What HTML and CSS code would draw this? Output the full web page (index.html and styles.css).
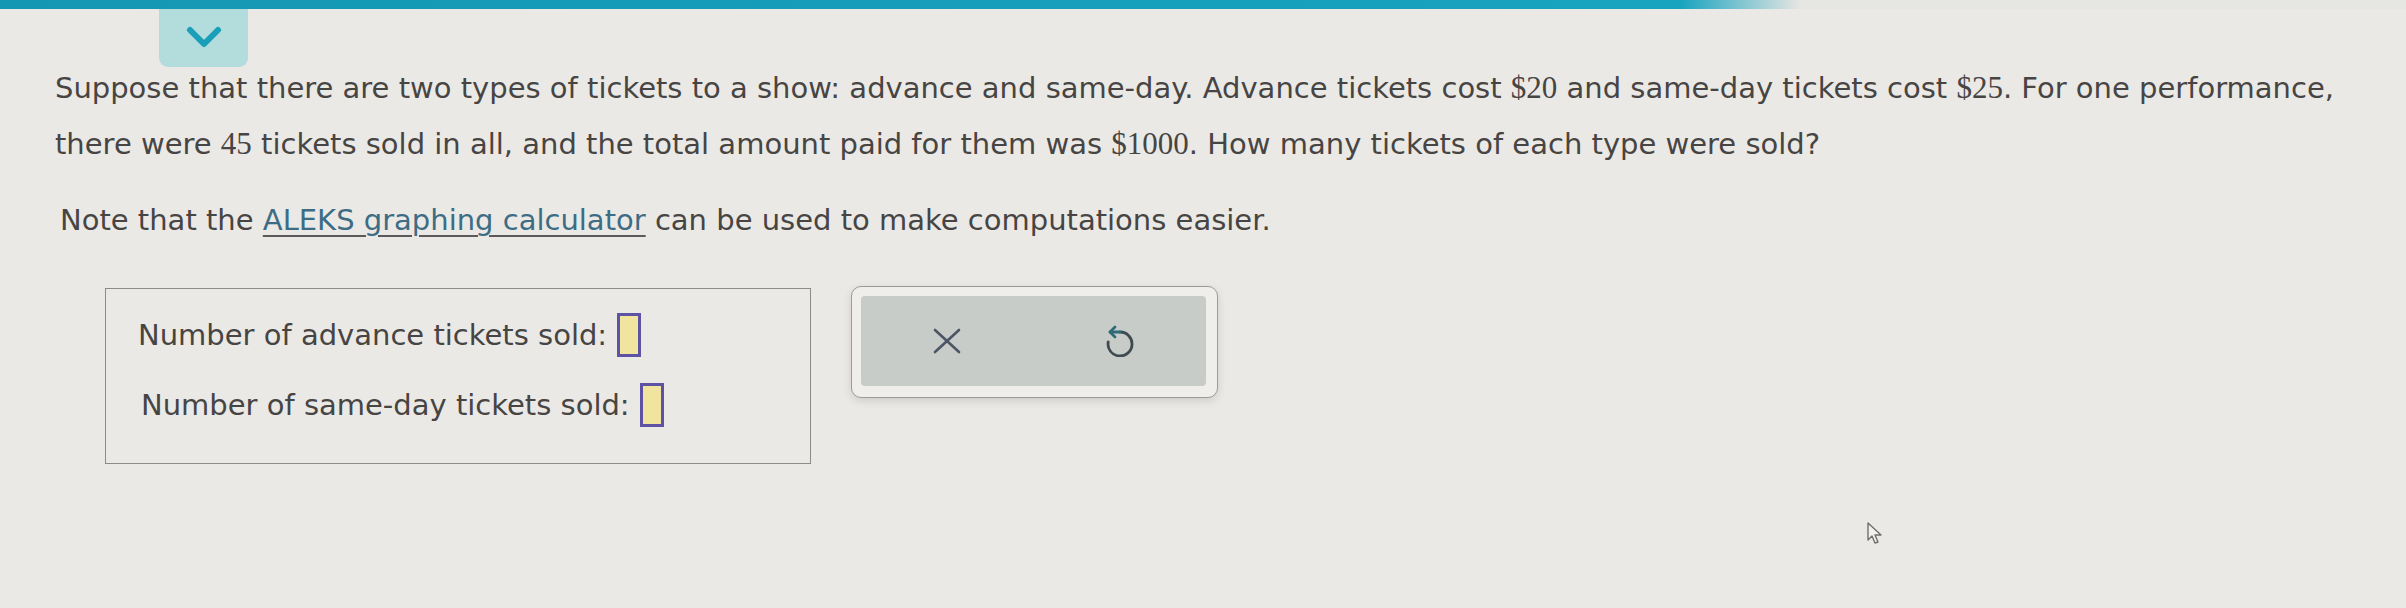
FILE: index.html
```html
<!DOCTYPE html>
<html lang="en">
<head>
<meta charset="utf-8">
<title>ALEKS question</title>
<link rel="stylesheet" href="styles.css">
</head>
<body>
<header class="topbar">
  <button class="collapse-tab" aria-label="Collapse">
    <svg width="36" height="22" viewBox="0 0 36 22"><polyline points="4,4 18,18 32,4" fill="none" stroke="#1a9fb8" stroke-width="6" stroke-linecap="round" stroke-linejoin="round"/></svg>
  </button>
</header>
<main class="page">
  <p class="question">Suppose that there are two types of tickets to a show: advance and same-day. Advance tickets cost <span class="math">$20</span> and same-day tickets cost <span class="math">$25</span>. For one performance, there were <span class="math">45</span> tickets sold in all, and the total amount paid for them was <span class="math">$1000</span>. How many tickets of each type were sold?</p>
  <p class="note">Note that the <a class="link" href="#">ALEKS graphing calculator</a> can be used to make computations easier.</p>
  <div class="work">
    <div class="answer-box">
      <div class="answer-row row-1"><span>Number of advance tickets sold:</span><span class="input"></span></div>
      <div class="answer-row row-2"><span>Number of same-day tickets sold:</span><span class="input"></span></div>
    </div>
    <div class="tools">
      <div class="tools-inner">
        <span class="tool">
          <svg width="28" height="26" viewBox="0 0 28 26"><path d="M2 2 L26 24 M26 2 L2 24" stroke="#4c5566" stroke-width="2.6" fill="none" stroke-linecap="round"/></svg>
        </span>
        <span class="tool">
          <svg width="30" height="32" viewBox="0 0 30 32"><path d="M15 7 A12 12 0 1 1 3.2 17" stroke="#3f4b50" stroke-width="2.8" fill="none" stroke-linecap="round"/><path d="M15 7 L5 7" stroke="#2f6a78" stroke-width="2.8" fill="none" stroke-linecap="round"/><path d="M10 2 L5 7 L10 12" stroke="#2f6a78" stroke-width="2.8" fill="none" stroke-linecap="round" stroke-linejoin="round"/></svg>
        </span>
      </div>
    </div>
  </div>
</main>
<svg class="cursor" width="18" height="24" viewBox="0 0 18 24"><path d="M2 2 L2 19 L6 15 L9 22 L12 21 L9 14 L15 14 Z" fill="#f2f1ee" stroke="#6f6f6f" stroke-width="1.4" stroke-linejoin="round"/></svg>
</body>
</html>
```

FILE: styles.css
```css
html, body {
  margin: 0;
  padding: 0;
}
body {
  background: #ebe9e6;
  color: #474543;
  font-family: "DejaVu Sans", Verdana, sans-serif;
  font-size: 29px;
  width: 2406px;
  height: 608px;
  overflow: hidden;
  position: relative;
}
.topbar {
  position: relative;
  height: 9px;
  background: linear-gradient(to right, #1497b3 0, #18a3bf 1680px, #e6e6e3 1800px);
}
.collapse-tab {
  position: absolute;
  top: 9px;
  left: 159px;
  width: 89px;
  height: 58px;
  border: none;
  padding: 0;
  background: #b3dcdd;
  border-radius: 0 0 9px 9px;
  display: flex;
  align-items: center;
  justify-content: center;
  padding-bottom: 2px;
}
.page {
  padding: 51px 40px 0 55px;
}
.question {
  margin: 0;
  max-width: 2320px;
  line-height: 56px;
}
.math {
  font-family: "Liberation Serif", "Times New Roman", serif;
  font-size: 31px;
  line-height: 1;
}
.note {
  margin: 20px 0 0 5px;
  line-height: 56px;
}
.link {
  color: #3d6d84;
  text-decoration: underline;
  text-decoration-color: #5a5a5a;
  text-underline-offset: 5px;
  text-decoration-thickness: 2px;
}
.work {
  display: flex;
  align-items: flex-start;
  gap: 40px;
  margin-top: 40px;
  margin-left: 50px;
}
.answer-box {
  width: 706px;
  height: 176px;
  border: 1.5px solid #8d8b88;
  box-sizing: border-box;
  padding: 24px 0 0 32px;
  display: flex;
  flex-direction: column;
  gap: 26px;
}
.answer-row {
  display: flex;
  align-items: center;
  gap: 10px;
  height: 44px;
}
.row-2 {
  padding-left: 3px;
}
.input {
  display: inline-block;
  width: 18px;
  height: 38px;
  border: 3px solid #5d52a3;
  background: #f0e49e;
}
.tools {
  width: 367px;
  height: 112px;
  box-sizing: border-box;
  border: 1.5px solid #9c9b98;
  border-radius: 10px;
  background: #efeeeb;
  padding: 9px 11px 11px 9px;
  box-shadow: 0 3px 8px rgba(0,0,0,0.12);
  margin-top: -2px;
}
.tools-inner {
  height: 100%;
  background: #c8ccc8;
  border-radius: 4px;
  display: flex;
}
.tool {
  flex: 1;
  display: flex;
  align-items: center;
  justify-content: center;
}
.cursor {
  position: absolute;
  left: 1866px;
  top: 521px;
}
```
